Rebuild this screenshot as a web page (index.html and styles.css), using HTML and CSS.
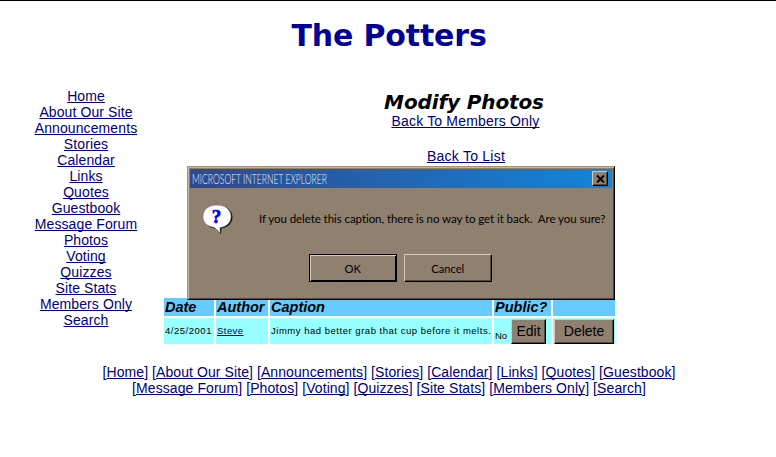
FILE: index.html
```html
<!DOCTYPE html>
<html lang="en">
<head>
<meta charset="utf-8">
<title>The Potters</title>
<link rel="stylesheet" href="styles.css">
</head>
<body>
<h1>The Potters</h1>
<div class="columns">
  <nav class="side">
    <a href="#">Home</a><a href="#">About Our Site</a><a href="#">Announcements</a><a href="#">Stories</a><a href="#">Calendar</a><a href="#">Links</a><a href="#">Quotes</a><a href="#">Guestbook</a><a href="#">Message Forum</a><a href="#">Photos</a><a href="#">Voting</a><a href="#">Quizzes</a><a href="#">Site Stats</a><a href="#">Members Only</a><a href="#">Search</a>
  </nav>
  <main>
    <h2>Modify Photos</h2>
    <a class="members" href="#">Back To Members Only</a>
    <a class="list" href="#">Back To List</a>
    <div class="photos">
      <div class="row head"><b>Date</b><b>Author</b><b>Caption</b><b>Public?</b><b></b></div>
      <div class="row data">
        <span class="date">4/25/2001</span>
        <span class="author"><a href="#">Steve</a></span>
        <span class="caption">Jimmy had better grab that cup before it melts.</span>
        <span class="public"><i>No</i><button class="edit">Edit</button></span>
        <span class="action"><button class="delete">Delete</button></span>
      </div>
    </div>
  </main>
</div>
<footer>
  <div>[<a href="#">Home</a>] [<a href="#">About Our Site</a>] [<a href="#">Announcements</a>] [<a href="#">Stories</a>] [<a href="#">Calendar</a>] [<a href="#">Links</a>] [<a href="#">Quotes</a>] [<a href="#">Guestbook</a>]</div>
  <div>[<a href="#">Message Forum</a>] [<a href="#">Photos</a>] [<a href="#">Voting</a>] [<a href="#">Quizzes</a>] [<a href="#">Site Stats</a>] [<a href="#">Members Only</a>] [<a href="#">Search</a>]</div>
</footer>
<div class="dialog" role="dialog">
  <div class="titlebar">
    <span class="title">MICROSOFT INTERNET EXPLORER</span>
    <button class="close" aria-label="Close"><svg width="9" height="8" viewBox="0 0 9 8"><path d="M1 0.5L8 7.5M8 0.5L1 7.5" stroke="#000" stroke-width="2"/></svg></button>
  </div>
  <div class="message">
    <svg class="bubble" width="32" height="32" viewBox="0 0 32 32">
      <path d="M14 2C23 1 30 5 30.500 13C30.500 19 26 23.500 19.500 24.500L19 30L13 24.500C6 23.500 2 19 2 13Z" fill="#111"/>
      <path d="M15 1C23 1 29 5.500 29 12.500C29 19 24 23 18 23.500L18 29L12.500 23.500C5 22.500 1 18.500 1 12.500C1 5.500 7 1 15 1Z" fill="#fff" stroke="#666" stroke-width=".5"/>
      <text x="14.500" y="18.500" text-anchor="middle" class="mark">?</text>
    </svg>
    <p>If you delete this caption, there is no way to get it back.&nbsp; Are you sure?</p>
  </div>
  <div class="buttons"><button class="ok"><span>OK</span></button><button><span>Cancel</span></button></div>
</div>
</body>
</html>
```
FILE: styles.css
```css
* { box-sizing: border-box; }
body { margin: 0; height: 457px; overflow: hidden; position: relative; background: #fff; border-top: 1px solid #000; font: 14px/16px "Liberation Sans", Arial, sans-serif; color: #000; }
a { color: #000078; text-decoration: underline; text-underline-offset: 1px; text-decoration-thickness: 1px; text-decoration-skip-ink: none; }
button { font-family: inherit; padding: 0; background: #908070; color: #000; border: 1px solid; border-color: #d8c8b8 #000 #000 #d8c8b8; box-shadow: inset -1px -1px #51483f; }
h1 { margin: 0; padding: 16px 0 0 2px; height: 87px; text-align: center; font: bold 30px/38px "DejaVu Sans", Verdana, sans-serif; letter-spacing: -.15px; color: #000096; }
.columns { display: grid; grid-template-columns: 164px 1fr; height: 276px; }
.side { display: flex; flex-direction: column; align-items: center; width: 172px; letter-spacing: .1px; }
main { display: flex; flex-direction: column; align-items: center; width: 600px; }
h2 { margin: 0; height: 25px; font: italic bold 20px/28px "DejaVu Sans", Verdana, sans-serif; letter-spacing: -.12px; }
.members { margin: 0 0 19px 3px; letter-spacing: .18px; }
.list { margin-left: 4px; letter-spacing: .25px; }
.photos { align-self: flex-start; width: 451px; margin-top: 134px; }
.row { display: grid; grid-template-columns: 50px 52px 222px 57px 62px; column-gap: 2px; }
.head { height: 18px; margin-bottom: 2px; }
.head b { background: #66ccff; font-size: 14.500px; line-height: 18px; font-style: italic; padding-left: 1px; }
.data { height: 26px; grid-template-rows: 26px; font-size: 9.500px; line-height: 26px; white-space: nowrap; }
.data > span { background: #99ffff; padding-left: 1px; }
.data .date, .data .caption { letter-spacing: .52px; }
.data .author { letter-spacing: .45px; }
.data .public { display: flex; align-items: center; }
.public i { font-style: normal; width: 16px; line-height: 16px; padding-top: 9px; }
.data button { height: 25px; font-size: 14px; line-height: 20px; }
.edit { width: 35px; }
.data .action { display: flex; align-items: center; padding-left: 1px; }
.delete { width: 60px; }
footer { padding-left: 2px; text-align: center; color: #000078; white-space: nowrap; letter-spacing: .08px; }
.dialog { position: absolute; left: 187px; top: 165px; width: 428px; height: 134px; background: #908070; border: 1px solid; border-color: #a09080 #000 #000 #a09080; box-shadow: inset 1px 1px #c4b4a4, inset -1px -1px #51483f; padding: 2px; font-family: Lato, sans-serif; }
.titlebar { height: 19px; display: flex; align-items: center; justify-content: space-between; padding: 0 4px 0 2px; background: linear-gradient(90deg, #30488c, #1285da); }
.title { color: #e8f0f8; font-size: 13px; font-weight: 300; white-space: nowrap; width: 136px; transform-origin: left; transform: scaleX(.66); }
.close { width: 16px; height: 15px; display: flex; align-items: center; justify-content: center; }
.message { display: flex; height: 66px; padding: 16px 0 0 12px; }
.bubble { flex: none; }
.mark { font: bold 19px "Liberation Serif", serif; fill: #0000e8; stroke: #0000e8; stroke-width: .6px; }
.message p { margin: 7px 0 0 25px; font-size: 11.500px; line-height: 16px; letter-spacing: -.065px; white-space: nowrap; }
.buttons { display: flex; gap: 7px; padding-left: 119px; }
.buttons button { width: 88px; height: 28px; font-size: 12px; }
.buttons span { display: inline-block; transform: scaleX(.93); }
.buttons .ok { border: 1px solid #000; box-shadow: inset 1px 1px #d8c8b8, inset -1px -1px #000; }
```
